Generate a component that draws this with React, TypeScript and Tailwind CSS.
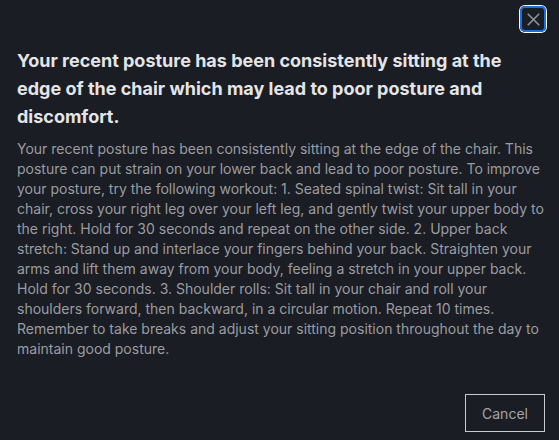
import { X } from 'lucide-react';

export default function App() {
    return (
        <div
            className="relative h-[440px] w-[559px] overflow-hidden bg-[#1a1d23]"
            style={{ fontFamily: 'Inter, "Noto Sans", sans-serif' }}
        >
            {/* close button, drawn in its focused state */}
            <button className="absolute right-[13px] top-[6px] flex h-[26px] w-[26px] items-center justify-center rounded-[5px] border-2 border-[#1a6ee0] text-[#8b8f97] shadow-[0_0_0_1px_#ffffff]">
                <X className="h-[21px] w-[21px] shrink-0" strokeWidth={2} />
            </button>

            <div className="pl-[17px] pr-[11px] pt-[47px]">
                <h2 className="pr-[6px] text-[18px] font-bold leading-[28px] text-[#e4e5e7]">
                    Your recent posture has been consistently sitting at the edge of the chair which may lead to poor posture and discomfort.
                </h2>
                <p className="mt-[8px] text-[14px] leading-[20px] text-[#9a9ca1]">
                    Your recent posture has been consistently sitting at the edge of the chair. This posture can put strain on your lower back and lead to poor posture. To improve your posture, try the following workout: 1. Seated spinal twist: Sit tall in your chair, cross your right leg over your left leg, and gently twist your upper body to the right. Hold for 30 seconds and repeat on the other side. 2. Upper back stretch: Stand up and interlace your fingers behind your back. Straighten your arms and lift them away from your body, feeling a stretch in your upper back. Hold for 30 seconds. 3. Shoulder rolls: Sit tall in your chair and roll your shoulders forward, then backward, in a circular motion. Repeat 10 times. Remember to take breaks and adjust your sitting position throughout the day to maintain good posture.
                </p>
            </div>

            <div className="absolute bottom-[8px] right-[14px]">
                <button className="h-[38px] w-[80px] border border-[#c9cacd] text-[14px] text-[#a3a5a9]">
                    Cancel
                </button>
            </div>
        </div>
    );
}
